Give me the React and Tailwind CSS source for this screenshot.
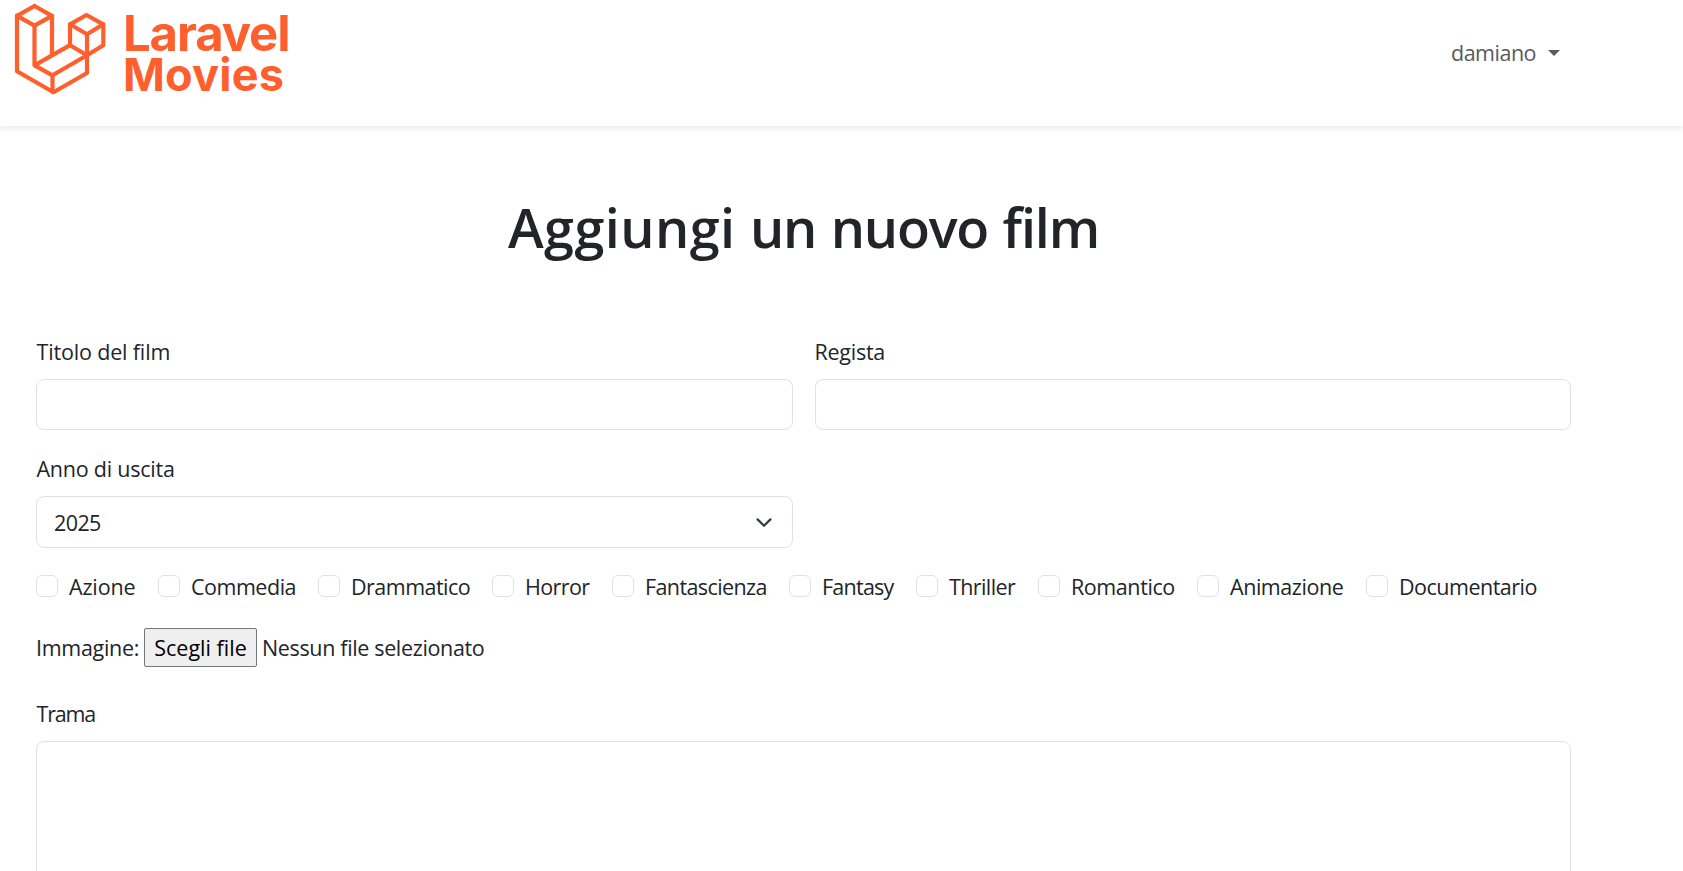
const genres = [
  { name: 'Azione', width: 'w-[122px]', tracking: 'tracking-[-0.15px]' },
  { name: 'Commedia', width: 'w-[160px]', tracking: 'tracking-[-0.48px]' },
  { name: 'Drammatico', width: 'w-[174px]', tracking: 'tracking-[-0.52px]' },
  { name: 'Horror', width: 'w-[120px]', tracking: 'tracking-[-0.6px]' },
  { name: 'Fantascienza', width: 'w-[177px]', tracking: 'tracking-[-0.6px]' },
  { name: 'Fantasy', width: 'w-[127px]', tracking: 'tracking-[-0.75px]' },
  { name: 'Thriller', width: 'w-[122px]', tracking: 'tracking-[-0.6px]' },
  { name: 'Romantico', width: 'w-[159px]', tracking: 'tracking-[-0.42px]' },
  { name: 'Animazione', width: 'w-[169px]', tracking: 'tracking-[-0.45px]' },
  { name: 'Documentario', width: 'w-[190px]', tracking: 'tracking-[-0.5px]' },
];

function Logo() {
  return (
    <a className="flex h-[126px] items-start text-[#ff5f2d]">
      <svg
        className="h-[100px] w-[110px] shrink-0"
        viewBox="0 0 110 100"
        fill="none"
        stroke="currentColor"
        strokeWidth="4.2"
        strokeLinejoin="round"
        strokeLinecap="round"
      >
        <path d="M34.5 6 17 15.8v55.4L53.5 92.2 87 73V34.5" />
        <path d="M34.5 6 52 15.8 34.5 25.7 17 15.8" />
        <path d="M34.5 25.7V65.3L52.5 75.3 87 55.3 70 45.2 34.5 65.3" />
        <path d="M52 15.8v39.3M52.5 75.3v16.5" />
        <path d="M86.5 15 70 24.3 87 34.3l16.3-10z" />
        <path d="M70 24.3v20.9M103.3 24.3v21L87 55.3" />
      </svg>
      <span className="flex flex-col pl-[13px] pt-[13px] font-['Inter',sans-serif] font-bold">
        <span className="h-[41px] text-[49px] leading-[41px] tracking-[-1.1px]">Laravel</span>
        <span className="text-[45px] leading-[42px] tracking-[0.2px]">Movies</span>
      </span>
    </a>
  );
}

function Navbar() {
  return (
    <nav className="flex h-[126px] justify-between bg-white shadow-[0_3px_6px_rgba(0,0,0,0.08)]">
      <Logo />
      <button className="mr-[123px] mt-[37px] flex h-[32px] items-center gap-[12px] text-[#595a5c]">
        <span className="tracking-[-0.5px]">damiano</span>
        <span className="h-0 w-0 border-x-[6.5px] border-t-[6.5px] border-x-transparent border-t-[#595a5c]" />
      </button>
    </nav>
  );
}

function Checkbox({ name, width, tracking }) {
  return (
    <label className={`flex shrink-0 items-center ${width}`}>
      <span className="mr-[11px] h-[22px] w-[22px] shrink-0 rounded-[6px] border border-[#dee2e6]" />
      <span className={`pt-[2px] ${tracking}`}>{name}</span>
    </label>
  );
}

export default function App() {
  return (
    <div className="h-[871px] w-full overflow-hidden bg-white font-['Open_Sans','Noto_Sans',sans-serif] text-[21.5px] leading-[32px] text-[#212529]">
      <Navbar />
      <main className="ml-[36px] w-[1535px]">
        <h1 className="mt-[67px] h-[68px] text-center text-[54px] font-semibold leading-[68px] [word-spacing:0.5px]">
          <span className="tracking-[0.4px]">Aggiungi</span> <span className="tracking-[-1.2px]">un</span>{' '}
          <span className="tracking-[-1.2px]">nuovo</span> <span className="tracking-[-1.2px]">film</span>
        </h1>
        <form className="pt-[76px]">
          <div className="grid grid-cols-2 gap-x-[22px]">
            <div>
              <label className="block h-[42px] pl-[0.5px] leading-[30px] tracking-[-0.16px]">Titolo del film</label>
              <div className="h-[51px] rounded-[8px] border border-[#dee2e6]" />
            </div>
            <div>
              <label className="block h-[42px] leading-[30px] tracking-[-0.25px]">Regista</label>
              <div className="h-[51px] rounded-[8px] border border-[#dee2e6]" />
            </div>
            <div>
              <label className="block h-[66px] pt-[24px] pl-[0.5px] leading-[30px] tracking-[-0.23px]">Anno di uscita</label>
              <div className="flex h-[52px] items-center justify-between rounded-[8px] border border-[#dee2e6] px-[17px]">
                <span className="pt-[2px] tracking-[-0.6px]">2025</span>
                <svg className="h-[20px] w-[22px]" viewBox="0 0 22 20" fill="none" stroke="#343a40" strokeWidth="2.2" strokeLinecap="round" strokeLinejoin="round">
                  <path d="m4.6 7.4 6.4 6.4 6.4-6.4" />
                </svg>
              </div>
            </div>
          </div>
          <div className="mt-[22px] flex h-[32px] w-max">
            {genres.map((genre) => (
              <Checkbox key={genre.name} {...genre} />
            ))}
          </div>
          <div className="mt-[26px] flex h-[39px] items-center">
            <span className="w-[108px] tracking-[-0.3px]">Immagine:</span>
            <button type="button" className="h-[39px] w-[113px] rounded-[2px] border border-[#767676] bg-[#efefef] text-center text-black">
              Scegli file
            </button>
            <span className="pl-[5px] tracking-[-0.35px]">Nessun file selezionato</span>
          </div>
          <label className="mt-[31px] block h-[43px] pl-[0.5px] leading-[32px] tracking-[-1.2px]">Trama</label>
          <div className="h-[180px] rounded-[8px] border border-[#dee2e6]" />
        </form>
      </main>
    </div>
  );
}
